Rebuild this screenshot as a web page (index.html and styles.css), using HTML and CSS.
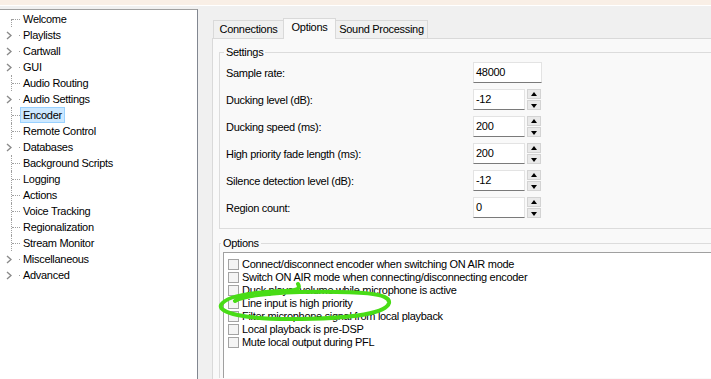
FILE: index.html
```html
<!DOCTYPE html>
<html lang="en">
  <head>
    <meta charset="UTF-8" />
    <meta name="viewport" content="width=device-width, initial-scale=1.0" />
    <title>Encoder Options</title>
    <link rel="stylesheet" href="styles.css">
  </head>
  <body>
    <div class="titlebar"></div>
    <div class="window">
      <div class="tree">
        <ul class="tree-list">
          <li class="node leaf first"><span class="twist"></span><span class="label">Welcome</span></li>
          <li class="node branch"><span class="twist"><svg width="6" height="9" viewBox="0 0 6 9"><polyline points="1,1 5,4.5 1,8" /></svg></span><span class="label">Playlists</span></li>
          <li class="node branch"><span class="twist"><svg width="6" height="9" viewBox="0 0 6 9"><polyline points="1,1 5,4.5 1,8" /></svg></span><span class="label">Cartwall</span></li>
          <li class="node branch"><span class="twist"><svg width="6" height="9" viewBox="0 0 6 9"><polyline points="1,1 5,4.5 1,8" /></svg></span><span class="label">GUI</span></li>
          <li class="node leaf"><span class="twist"></span><span class="label">Audio Routing</span></li>
          <li class="node branch"><span class="twist"><svg width="6" height="9" viewBox="0 0 6 9"><polyline points="1,1 5,4.5 1,8" /></svg></span><span class="label">Audio Settings</span></li>
          <li class="node leaf"><span class="twist"></span><span class="label selected">Encoder</span></li>
          <li class="node leaf"><span class="twist"></span><span class="label">Remote Control</span></li>
          <li class="node branch"><span class="twist"><svg width="6" height="9" viewBox="0 0 6 9"><polyline points="1,1 5,4.5 1,8" /></svg></span><span class="label">Databases</span></li>
          <li class="node leaf"><span class="twist"></span><span class="label">Background Scripts</span></li>
          <li class="node leaf"><span class="twist"></span><span class="label">Logging</span></li>
          <li class="node leaf"><span class="twist"></span><span class="label">Actions</span></li>
          <li class="node leaf"><span class="twist"></span><span class="label">Voice Tracking</span></li>
          <li class="node leaf"><span class="twist"></span><span class="label">Regionalization</span></li>
          <li class="node leaf"><span class="twist"></span><span class="label">Stream Monitor</span></li>
          <li class="node branch"><span class="twist"><svg width="6" height="9" viewBox="0 0 6 9"><polyline points="1,1 5,4.5 1,8" /></svg></span><span class="label">Miscellaneous</span></li>
          <li class="node branch"><span class="twist"><svg width="6" height="9" viewBox="0 0 6 9"><polyline points="1,1 5,4.5 1,8" /></svg></span><span class="label">Advanced</span></li>
        </ul>
      </div>

      <div class="pane">
        <div class="tabs">
          <div class="tab tab-connections">Connections</div>
          <div class="tab tab-options active">Options</div>
          <div class="tab tab-sound">Sound Processing</div>
        </div>
        <div class="tab-page">
          <fieldset class="group settings">
            <legend>Settings</legend>
            <div class="field-grid">
              <span class="field-label">Sample rate:</span>
              <div class="control"><div class="edit wide">48000</div></div>

              <span class="field-label">Ducking level (dB):</span>
              <div class="control"><div class="edit">-12</div><div class="spin"><span class="spin-btn up"></span><span class="spin-btn down"></span></div></div>

              <span class="field-label">Ducking speed (ms):</span>
              <div class="control"><div class="edit">200</div><div class="spin"><span class="spin-btn up"></span><span class="spin-btn down"></span></div></div>

              <span class="field-label">High priority fade length (ms):</span>
              <div class="control"><div class="edit">200</div><div class="spin"><span class="spin-btn up"></span><span class="spin-btn down"></span></div></div>

              <span class="field-label">Silence detection level (dB):</span>
              <div class="control"><div class="edit">-12</div><div class="spin"><span class="spin-btn up"></span><span class="spin-btn down"></span></div></div>

              <span class="field-label">Region count:</span>
              <div class="control"><div class="edit">0</div><div class="spin"><span class="spin-btn up"></span><span class="spin-btn down"></span></div></div>
            </div>
          </fieldset>

          <fieldset class="group options">
            <legend>Options</legend>
            <div class="checklist">
              <div class="check-item"><span class="box"></span>Connect/disconnect encoder when switching ON AIR mode</div>
              <div class="check-item"><span class="box"></span>Switch ON AIR mode when connecting/disconnecting encoder</div>
              <div class="check-item"><span class="box"></span>Duck player volume while microphone is active</div>
              <div class="check-item"><span class="box"></span>Line input is high priority</div>
              <div class="check-item"><span class="box"></span>Filter microphone signal from local playback</div>
              <div class="check-item"><span class="box"></span>Local playback is pre-DSP</div>
              <div class="check-item"><span class="box"></span>Mute local output during PFL</div>
            </div>
          </fieldset>
        </div>
      </div>
    </div>

    <!-- hand drawn highlight over the list -->
    <svg class="scribble" width="711" height="379" viewBox="0 0 711 379">
      <path d="M298 284 C 301 289, 296 291, 285 291 C 250 292, 226 296, 221 305 C 218 313, 245 319, 290 319 C 340 319, 386 315, 389 303 C 391 293, 360 291, 300 292 C 270 293, 245 295, 235 301" />
    </svg>
  </body>
</html>
```

FILE: styles.css
```css
body {
  margin: 0;
  padding: 0;
  width: 711px;
  height: 379px;
  overflow: hidden;
  position: relative;
  background-color: #f0f0f0;
  font-family: "Liberation Sans", Arial, sans-serif;
  font-size: 11px;
  letter-spacing: -0.3px;
  color: #000;
}
.titlebar {
  height: 5px;
  background-color: #f9efe6;
  border-bottom: 1px solid #fff;
}
.window {
  display: flex;
  height: 373px;
}

/* navigation tree */
.tree {
  flex: none;
  box-sizing: border-box;
  width: 198px;
  height: 370px;
  margin-top: 3px;
  background: #fff;
  border-top: 1px solid #a0a0a0;
  border-right: 1px solid #828790;
  padding-top: 1px;
}
.tree-list {
  list-style: none;
  margin: 0;
  padding: 0;
}
.node {
  display: flex;
  height: 16px;
  align-items: center;
}
.twist {
  width: 20px;
  height: 16px;
  position: relative;
  flex-shrink: 0;
}
.leaf .twist::before {
  content: "";
  position: absolute;
  left: 11px;
  top: 0;
  height: 16px;
  border-left: 1px dotted #a0a0a0;
}
.leaf.first .twist::before {
  top: 8px;
  height: 8px;
}
.leaf .twist::after {
  content: "";
  position: absolute;
  left: 12px;
  top: 8px;
  width: 8px;
  border-top: 1px dotted #a0a0a0;
}
.branch .twist svg {
  position: absolute;
  left: 6px;
  top: 4px;
}
.branch .twist svg polyline {
  fill: none;
  stroke: #8a8a8a;
  stroke-width: 1.4;
}
.branch .twist::after {
  content: "";
  position: absolute;
  left: 19px;
  top: 8px;
  width: 1px;
  height: 1px;
  background: #a0a0a0;
}
.label {
  line-height: 14px;
  padding: 0 2px;
  border: 1px solid transparent;
  white-space: nowrap;
}
.label.selected {
  background: #cce8ff;
  border-color: #99d1ff;
}

/* right side */
.pane {
  flex: 1;
  min-width: 0;
  padding-left: 14px;
  padding-top: 12px;
}
.tabs {
  display: flex;
  align-items: flex-end;
  height: 20px;
  padding-left: 1px;
}
.tab {
  box-sizing: border-box;
  height: 18px;
  border: 1px solid #d9d9d9;
  border-bottom: none;
  background: #f0f0f0;
  text-align: center;
  line-height: 17px;
  margin-right: -1px;
}
.tab-connections {
  width: 71px;
}
.tab-options {
  width: 53px;
}
.tab-sound {
  width: 93px;
}
.tab.active {
  height: 21px;
  line-height: 16px;
  background: #f9f9f9;
  position: relative;
  margin-bottom: -1px;
  z-index: 1;
}
.tab-page {
  height: 341px;
  box-sizing: border-box;
  background: #f9f9f9;
  border-top: 1px solid #d9d9d9;
  border-left: 1px solid #d9d9d9;
  padding: 6px 0 0 6px;
}

.group {
  margin: 0;
  min-width: 0;
  border: 1px solid #dcdcdc;
  border-right: none;
}
.group legend {
  padding: 0 2px;
  margin-left: -2px;
  line-height: 14px;
}
.settings {
  padding: 3px 0 10px 6px;
}
.options {
  margin-top: 7px;
  padding: 2px 0 0 3px;
  border-bottom: none;
}

.field-grid {
  display: grid;
  grid-template-columns: 247px auto;
  row-gap: 6px;
  align-items: center;
}
.control {
  display: flex;
  align-items: center;
  gap: 2px;
}
.edit {
  box-sizing: border-box;
  width: 52px;
  height: 21px;
  line-height: 19px;
  padding-left: 2px;
  background: #fff;
  border: 1px solid #e3e3e3;
  border-bottom-color: #7a7a7a;
}
.edit.wide {
  width: 69px;
}
.spin {
  display: flex;
  flex-direction: column;
  gap: 1px;
}
.spin-btn {
  box-sizing: border-box;
  width: 14px;
  height: 10px;
  background: #e9e9e9;
  border: 1px solid #d3d3d3;
  position: relative;
}
.spin-btn::after {
  content: "";
  position: absolute;
  left: 3px;
  width: 0;
  height: 0;
  border-left: 3px solid transparent;
  border-right: 3px solid transparent;
}
.spin-btn.up::after {
  top: 2px;
  border-bottom: 4px solid #000;
}
.spin-btn.down::after {
  top: 3px;
  border-top: 4px solid #000;
}

.checklist {
  box-sizing: border-box;
  background: #fff;
  border-top: 1px solid #a0a0a0;
  border-left: 1px solid #a0a0a0;
  height: 126px;
  padding: 5px 0 0 4px;
}
.check-item {
  display: flex;
  align-items: center;
  height: 13px;
  line-height: 13px;
  white-space: nowrap;
}
.box {
  box-sizing: border-box;
  width: 11px;
  height: 11px;
  border: 1px solid #a3a3a3;
  background: #f4f4f4;
  margin-right: 3px;
  flex-shrink: 0;
}

.scribble {
  position: absolute;
  left: 0;
  top: 0;
  pointer-events: none;
}
.scribble path {
  fill: none;
  stroke: #48dc16;
  stroke-width: 4;
  stroke-linecap: round;
  stroke-linejoin: round;
}
```
